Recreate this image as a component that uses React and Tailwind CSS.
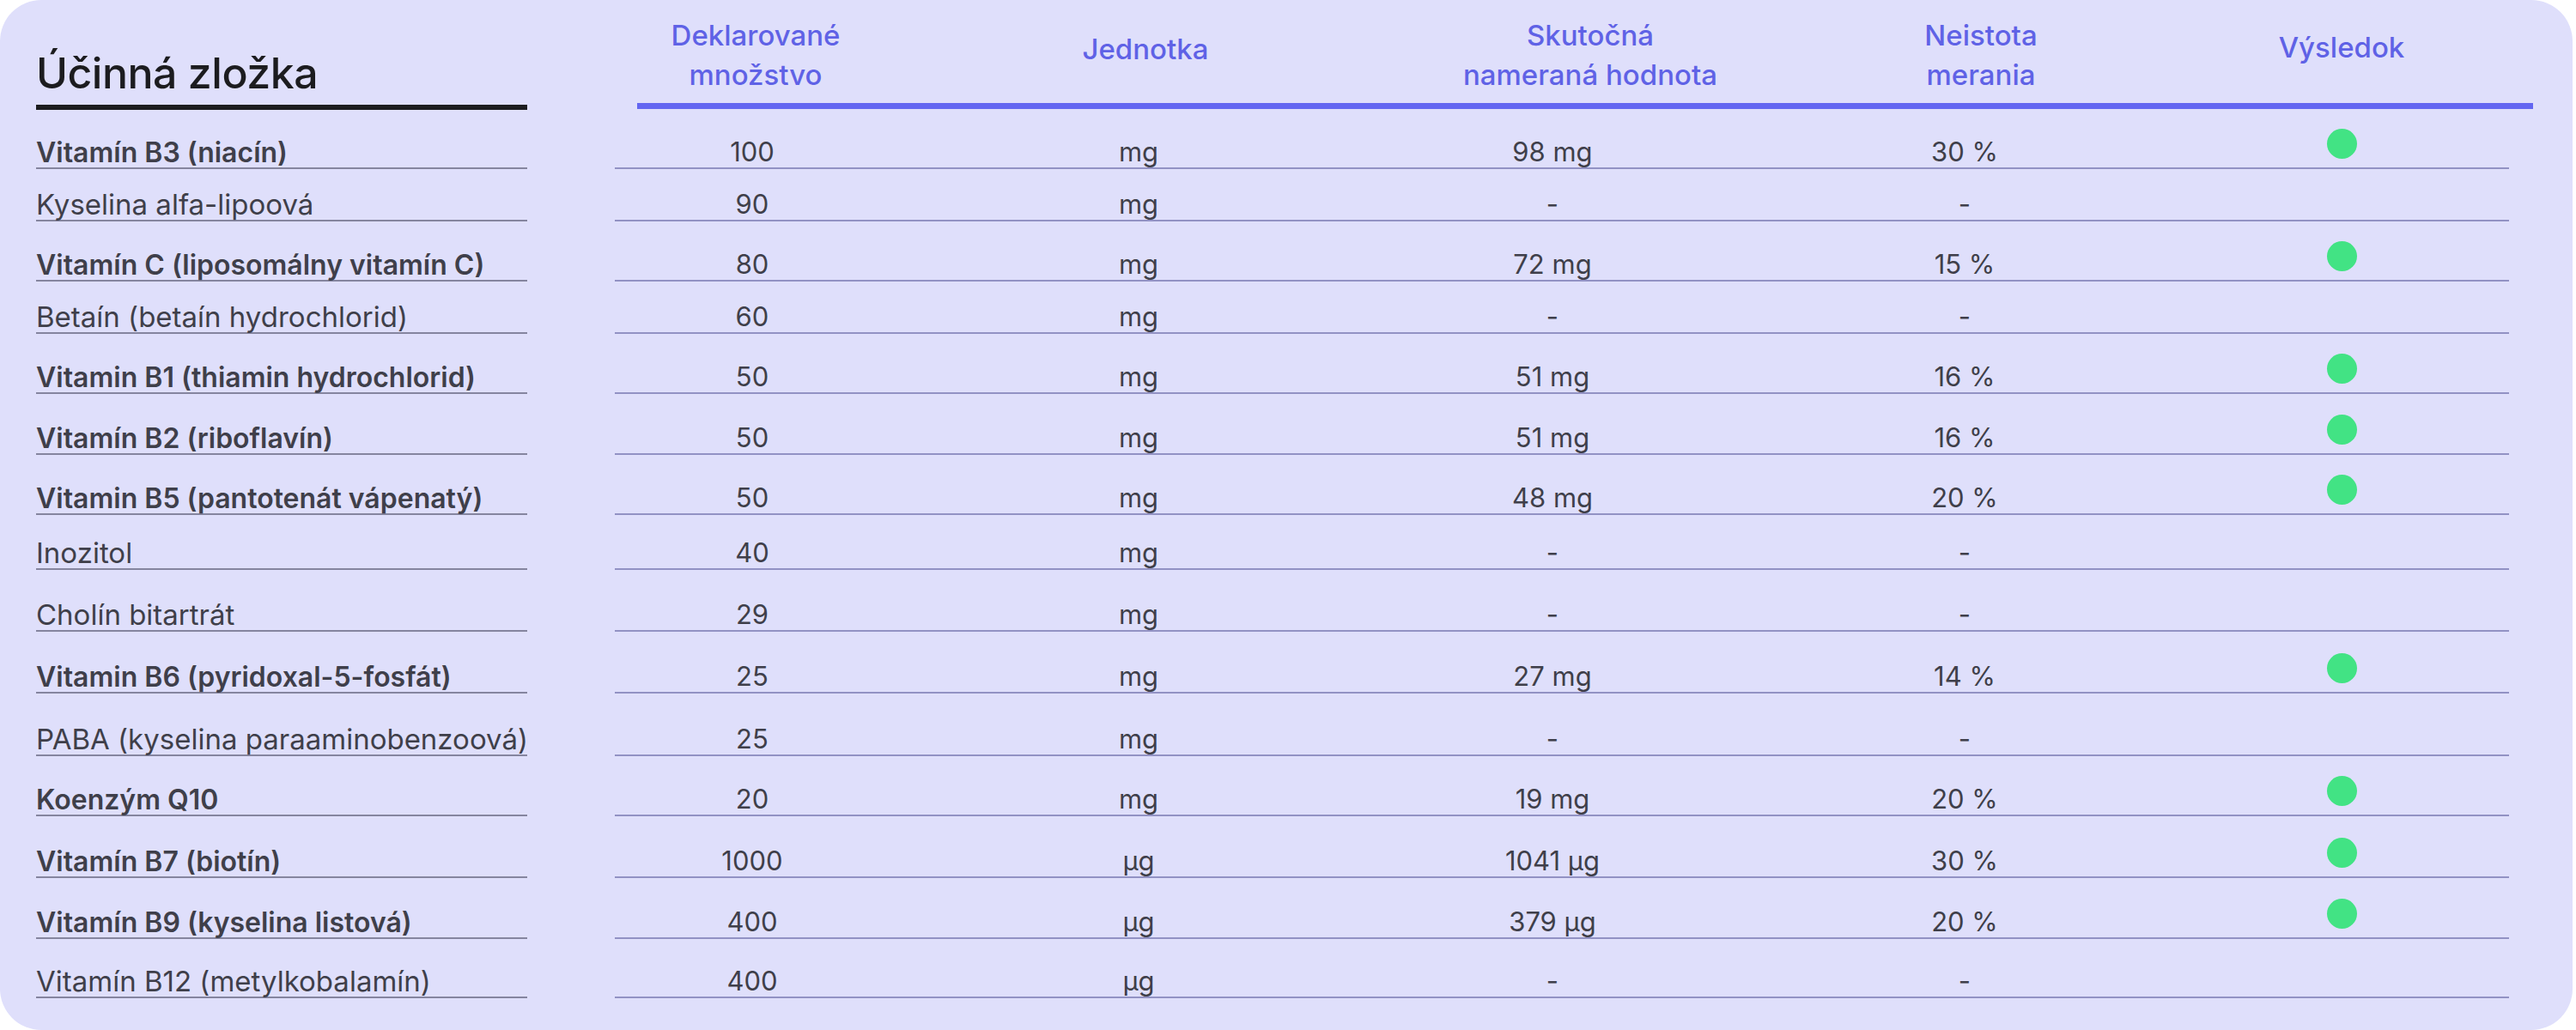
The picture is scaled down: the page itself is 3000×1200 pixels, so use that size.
const rows = [
  { name: "Vitamín B3 (niacín)", bold: true, amount: "100", unit: "mg", measured: "98 mg", unc: "30 %", ok: true, h: 69 },
  { name: "Kyselina alfa-lipoová", amount: "90", unit: "mg", measured: "-", unc: "-", h: 61 },
  { name: "Vitamín C (liposomálny vitamín C)", bold: true, amount: "80", unit: "mg", measured: "72 mg", unc: "15 %", ok: true, h: 70 },
  { name: "Betaín (betaín hydrochlorid)", amount: "60", unit: "mg", measured: "-", unc: "-", h: 61 },
  { name: "Vitamin B1 (thiamin hydrochlorid)", bold: true, amount: "50", unit: "mg", measured: "51 mg", unc: "16 %", ok: true, h: 70 },
  { name: "Vitamín B2 (riboflavín)", bold: true, amount: "50", unit: "mg", measured: "51 mg", unc: "16 %", ok: true, h: 71 },
  { name: "Vitamin B5 (pantotenát vápenatý)", bold: true, amount: "50", unit: "mg", measured: "48 mg", unc: "20 %", ok: true, h: 70 },
  { name: "Inozitol", amount: "40", unit: "mg", measured: "-", unc: "-", h: 64 },
  { name: "Cholín bitartrát", amount: "29", unit: "mg", measured: "-", unc: "-", h: 72 },
  { name: "Vitamin B6 (pyridoxal-5-fosfát)", bold: true, amount: "25", unit: "mg", measured: "27 mg", unc: "14 %", ok: true, h: 72 },
  { name: "PABA (kyselina paraaminobenzoová)", amount: "25", unit: "mg", measured: "-", unc: "-", h: 73 },
  { name: "Koenzým Q10", bold: true, amount: "20", unit: "mg", measured: "19 mg", unc: "20 %", ok: true, h: 70 },
  { name: "Vitamín B7 (biotín)", bold: true, amount: "1000", unit: "µg", measured: "1041 µg", unc: "30 %", ok: true, h: 72 },
  { name: "Vitamín B9 (kyselina listová)", bold: true, amount: "400", unit: "µg", measured: "379 µg", unc: "20 %", ok: true, h: 71 },
  { name: "Vitamín B12 (metylkobalamín)", amount: "400", unit: "µg", measured: "-", unc: "-", h: 69 },
];

const Cell = ({ children }) => (
  <div className="flex items-end justify-center pb-[3px] leading-none">{children}</div>
);

export default function App() {
  return (
    <div className="w-[3000px] h-[1200px] bg-white font-[Inter,'Liberation_Sans',sans-serif]">
      <div className="w-[2996px] h-[1200px] bg-[#dfdffb] rounded-[48px] pl-[42px] text-[#3f3f4a]">
        {/* header */}
        <div className="flex items-end h-[128px]">
          <div className="w-[572px] border-b-[6px] border-[#1c1c1f] pb-[12px]">
            <h1 className="text-[50px] font-medium leading-none text-[#1c1c1f] tracking-[-0.5px]">
              Účinná zložka
            </h1>
          </div>
          <div className="ml-[128px] w-[2208px] mb-[1px] border-b-[7px] border-[#6366f1] grid grid-cols-[276px_632px_404px_506px_334px_1fr] h-[127px] text-[33px] font-medium text-[#5f62e6] leading-[46px] text-center">
            <div className="pt-[18px]">Deklarované<br />množstvo</div>
            <div className="pt-[34px]">Jednotka</div>
            <div className="pt-[18px]">Skutočná<br />nameraná hodnota</div>
            <div className="pt-[18px]">Neistota<br />merania</div>
            <div className="pt-[32px]">Výsledok</div>
            <div />
          </div>
        </div>

        {/* rows */}
        {rows.map((r) => (
          <div key={r.name} className="flex" style={{ height: r.h }}>
            <div
              className={`w-[572px] border-b-2 border-[#85859f] flex items-end pb-[1px] leading-none whitespace-nowrap ${
                r.bold ? "font-semibold text-[32px]" : "font-normal text-[33px]"
              }`}
            >
              {r.name}
            </div>
            <div className="ml-[102px] w-[2206px] border-b-2 border-[#9292c4] grid grid-cols-[320px_580px_384px_576px_302px_1fr] text-[31px]">
              <Cell>{r.amount}</Cell>
              <Cell>{r.unit}</Cell>
              <Cell>{r.measured}</Cell>
              <Cell>{r.unc}</Cell>
              <div className="flex items-end justify-center pb-[10px]">
                {r.ok && <div className="w-[35px] h-[35px] rounded-full bg-[#42e384]" />}
              </div>
              <div />
            </div>
          </div>
        ))}
      </div>
    </div>
  );
}
